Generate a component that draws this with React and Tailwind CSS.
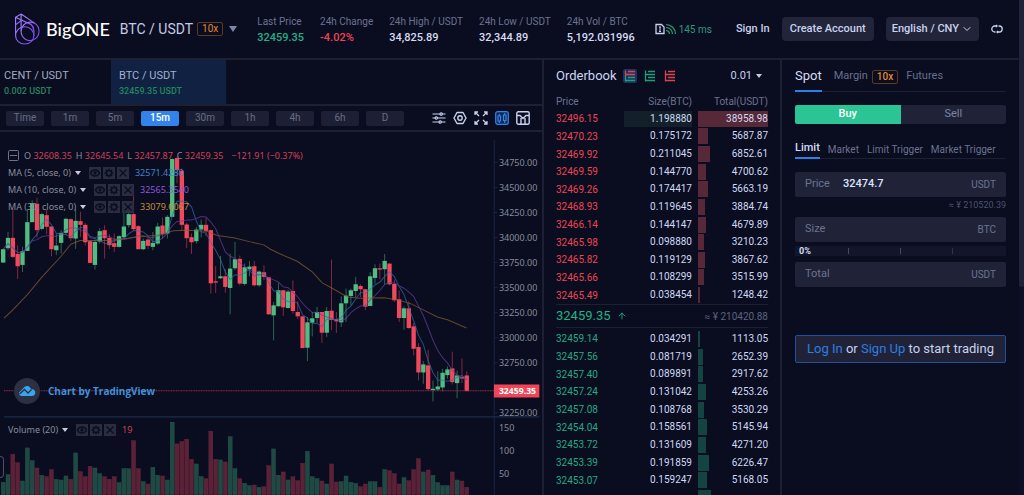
import { useState } from 'react';
import { ChevronDown, ArrowUp } from 'lucide-react';

const stats = [
  { label: 'Last Price', value: '32459.35', color: 'text-[#22b187]' },
  { label: '24h Change', value: '-4.02%', color: 'text-[#ec4652]' },
  { label: '24h High / USDT', value: '34,825.89', color: 'text-[#d5dcf0]' },
  { label: '24h Low / USDT', value: '32,344.89', color: 'text-[#d5dcf0]' },
  { label: '24h Vol / BTC', value: '5,192.031996', color: 'text-[#d5dcf0]' },
];

const intervals = ['Time', '1m', '5m', '15m', '30m', '1h', '4h', '6h', 'D'];

const asks = [
  ['32496.15', '1.198880', '38958.98'],
  ['32470.23', '0.175172', '5687.87'],
  ['32469.92', '0.211045', '6852.61'],
  ['32469.59', '0.144770', '4700.62'],
  ['32469.26', '0.174417', '5663.19'],
  ['32468.93', '0.119645', '3884.74'],
  ['32466.14', '0.144147', '4679.89'],
  ['32465.98', '0.098880', '3210.23'],
  ['32465.82', '0.119129', '3867.62'],
  ['32465.66', '0.108299', '3515.99'],
  ['32465.49', '0.038454', '1248.42'],
];

const bids = [
  ['32459.14', '0.034291', '1113.05'],
  ['32457.56', '0.081719', '2652.39'],
  ['32457.40', '0.089891', '2917.62'],
  ['32457.24', '0.131042', '4253.26'],
  ['32457.08', '0.108768', '3530.29'],
  ['32454.04', '0.158561', '5145.94'],
  ['32453.72', '0.131609', '4271.20'],
  ['32453.39', '0.191859', '6226.47'],
  ['32453.07', '0.159247', '5168.05'],
];

const MAX_TOTAL = 38958.98;

// [up, body top, body bottom, high, low, volume]
const candles = [
  [1, 357, 397, 357, 397, 37], [1, 323, 354, 305, 360, 60], [0, 323, 380, 237, 383, 121], [0, 371, 408, 345, 446, 96],
  [1, 363, 404, 350, 425, 41], [1, 276, 362, 236, 362, 140], [1, 219, 276, 210, 276, 102], [0, 221, 300, 203, 322, 80],
  [1, 252, 296, 248, 300, 58], [0, 255, 290, 238, 312, 54], [0, 289, 357, 289, 378, 75], [1, 346, 360, 310, 374, 46],
  [1, 308, 338, 300, 370, 44], [1, 266, 308, 263, 315, 56], [0, 267, 324, 265, 333, 46], [1, 272, 325, 236, 356, 125],
  [0, 273, 284, 245, 320, 69], [0, 284, 336, 278, 346, 54], [0, 333, 398, 330, 398, 85], [1, 335, 404, 328, 418, 80],
  [1, 303, 334, 294, 340, 63], [0, 300, 324, 285, 385, 54], [0, 323, 345, 312, 356, 46], [0, 339, 350, 310, 365, 54],
  [1, 318, 350, 315, 352, 36], [1, 289, 321, 240, 325, 78], [1, 252, 285, 225, 292, 78], [0, 252, 297, 170, 300, 162],
  [0, 288, 357, 285, 357, 78], [1, 332, 357, 325, 360, 39], [0, 328, 347, 322, 357, 32], [1, 338, 350, 305, 360, 82],
  [1, 289, 340, 278, 345, 58], [0, 286, 312, 262, 325, 56], [1, 260, 310, 255, 325, 44], [1, 87, 260, 85, 262, 217],
  [0, 84, 120, 80, 160, 152], [0, 122, 284, 115, 300, 159], [0, 283, 324, 278, 354, 166], [0, 321, 336, 310, 371, 106],
  [1, 298, 333, 290, 340, 92], [1, 284, 298, 268, 322, 54], [0, 284, 302, 263, 318, 48], [0, 300, 459, 298, 490, 190],
  [0, 453, 457, 407, 488, 106], [1, 438, 444, 377, 446, 104], [0, 438, 470, 416, 487, 98], [1, 415, 473, 370, 552, 174],
  [1, 387, 414, 335, 420, 78], [0, 386, 460, 376, 466, 48], [1, 411, 461, 400, 466, 34], [1, 409, 417, 392, 438, 27],
  [0, 408, 465, 392, 469, 29], [1, 424, 465, 420, 470, 22], [0, 426, 440, 405, 450, 24], [0, 441, 552, 441, 552, 87],
  [1, 525, 555, 515, 630, 137], [1, 480, 528, 458, 528, 58], [0, 480, 531, 478, 557, 68], [1, 484, 533, 478, 535, 44],
  [0, 482, 542, 450, 550, 54], [0, 545, 558, 512, 565, 42], [0, 558, 653, 558, 653, 94], [1, 576, 652, 560, 692, 130],
  [1, 564, 577, 545, 618, 54], [1, 545, 563, 530, 578, 48], [0, 545, 607, 545, 638, 41], [1, 542, 607, 530, 620, 32],
  [0, 541, 569, 388, 600, 92], [0, 567, 573, 545, 608, 38], [1, 519, 576, 498, 590, 39], [1, 496, 519, 475, 575, 56],
  [1, 480, 497, 475, 525, 37], [1, 462, 482, 440, 500, 34], [0, 467, 477, 462, 500, 24], [0, 477, 529, 477, 539, 32],
  [1, 438, 527, 426, 527, 39], [1, 414, 443, 402, 460, 39], [0, 414, 418, 400, 447, 22], [1, 392, 417, 371, 462, 75],
  [0, 400, 462, 400, 465, 72], [0, 461, 510, 448, 515, 63], [0, 507, 563, 480, 575, 32], [1, 534, 563, 528, 598, 51],
  [0, 534, 593, 513, 595, 42], [0, 588, 655, 578, 675, 75], [0, 650, 726, 638, 750, 108], [1, 702, 726, 692, 760, 68],
  [0, 705, 776, 658, 780, 74], [1, 775, 779, 750, 813, 58], [1, 768, 777, 722, 782, 36], [1, 727, 771, 715, 783, 27],
  [1, 717, 734, 708, 745, 27], [0, 714, 755, 664, 762, 68], [1, 735, 758, 720, 803, 44], [0, 740, 744, 684, 758, 41],
  [0, 735, 782, 723, 782, 22],
];

const candleX = (i) => 24 + (i - 1) * 14.46;

// Simple moving average of the closes, as polyline points
const movingAverage = (period) =>
  candles
    .map((_, i) => {
      const slice = candles.slice(Math.max(0, i - period + 1), i + 1);
      const sum = slice.reduce((acc, c) => acc + (c[0] ? c[1] : c[2]), 0);
      return `${candleX(i).toFixed(1)},${(sum / slice.length).toFixed(1)}`;
    })
    .join(' ');

const priceTicks = ['34750.00', '34500.00', '34250.00', '34000.00', '33750.00', '33500.00', '33250.00', '33000.00', '32750.00', null, '32250.00'];

const Logo = () => (
  <svg viewBox="0 0 78 98" className="h-8 w-6.5" fill="none" strokeWidth="3.5">
    <defs>
      <linearGradient id="logo" x1="0" y1="0" x2="1" y2="1">
        <stop offset="0" stopColor="#a583ff" />
        <stop offset="1" stopColor="#7443ea" />
      </linearGradient>
    </defs>
    <g stroke="url(#logo)">
      <path d="M21 3 L4 13 V70 A28 25 0 0 0 32 95 C48 95 60 84 60 70 C60 54 48 42 32 42 C16 42 4 54 4 70" />
      <path d="M21 3 L62 31 A29 29 0 0 1 59 82 C40 90 21 76 21 56 V3" />
      <path d="M4 13 L42 31 C58 34 62 50 60 70" />
      <path d="M21 56 C21 40 34 28 48 28 C54 28 58 29 62 31" />
      <path d="M21 24 L4 36" />
    </g>
  </svg>
);

const BookIcon = ({ top, bottom, active }) => (
  <button type="button" aria-label="Orderbook view" className={`flex size-3.5 items-center justify-center rounded-xs ${active ? 'bg-[#1b3360]' : ''}`}>
    <svg viewBox="0 0 12 12" className="size-3" fill="none" strokeWidth="1.3">
      <path d="M1.5 0.5 V6 M4 1.5 H11 M4 4.5 H11 M1.5 4.5 H4" stroke={top} />
      <path d="M1.5 6 V11.5 M4 7.5 H11 M4 10.5 H11 M1.5 10.5 H4" stroke={bottom} />
    </svg>
  </button>
);

const Caret = () => <span className="inline-block border-x-3 border-t-4 border-x-transparent border-t-[#c5cbdb]" />;

const LegendIcons = () => (
  <span className="ml-1 flex gap-0.5">
    <button type="button" aria-label="Hide" className="flex size-3 items-center justify-center bg-[#2a2d40]">
      <svg viewBox="0 0 12 12" className="size-3" fill="none" stroke="#0b0d22" strokeWidth="1.3">
        <path d="M1.5 6 C3 2 9 2 10.500 6 C9 10 3 10 1.500 6 Z" />
        <circle cx="6" cy="6" r="1" />
      </svg>
    </button>
    <button type="button" aria-label="Settings" className="flex size-3 items-center justify-center bg-[#2a2d40]">
      <svg viewBox="0 0 12 12" className="size-3" fill="none" stroke="#0b0d22">
        <circle cx="6" cy="6" r="2.600" strokeWidth="1.500" />
        <path d="M6 1.500V3M6 9V10.500M1.500 6H3M9 6H10.500M2.800 2.800L3.900 3.900M8.100 8.100L9.200 9.200M9.200 2.800L8.100 3.900M3.900 8.100L2.800 9.200" strokeWidth="1.400" />
      </svg>
    </button>
    <button type="button" aria-label="Remove" className="flex size-3 items-center justify-center bg-[#2a2d40]">
      <svg viewBox="0 0 12 12" className="size-3" stroke="#0b0d22" strokeWidth="1.4">
        <path d="M2.500 2.500L9.500 9.500M9.500 2.500L2.500 9.500" />
      </svg>
    </button>
  </span>
);

const Header = () => (
  <header className="flex h-15 shrink-0 items-center border-b-2 border-[#1d1f33] pr-4 pl-3.5 whitespace-nowrap">
    <a href="#home" className="flex items-center gap-1.5">
      <Logo />
      <span className="font-[Lato] text-lg font-medium text-white">BigONE</span>
    </a>
    <h1 className="ml-2.5 text-sm text-[#c3cbe3]">BTC / USDT</h1>
    <span className="ml-1 rounded-xs border border-[#5a3a22] px-1 text-[10px] leading-3 text-[#e08a35]">10x</span>
    <span className="ml-1.5 border-x-4 border-t-6 border-x-transparent border-t-[#7d87a5]" />

    <dl className="ml-5 flex gap-4 pt-0.5">
      {stats.map((s) => (
        <div key={s.label}>
          <dt className="text-[10px] leading-4 text-[#6a7390]">{s.label}</dt>
          <dd className={`text-[11px] leading-4 font-medium ${s.color}`}>{s.value}</dd>
        </div>
      ))}
    </dl>

    <div className="ml-auto flex items-center text-[11px] text-[#c8d2ee]">
      <svg viewBox="0 0 22 12" className="h-3 w-5.5" fill="none">
        <path d="M1 1.500H6.500L9 4V10.500H1Z" stroke="#c8d2ee" strokeWidth="1.300" />
        <path d="M4 4H6M5 4V8.500M4 8.500H6" stroke="#c8d2ee" />
        <path d="M11 1.500A9.500 9.500 0 0 1 20.500 11M11 4.500A6.500 6.500 0 0 1 17.500 11M11 7.500A3.500 3.500 0 0 1 14.500 11" stroke="#2f9a6f" strokeWidth="1.200" />
      </svg>
      <span className="ml-0.5 text-[10px] text-[#2f9a78]">145 ms</span>
      <a href="#signin" className="ml-6 font-medium">Sign In</a>
      <button type="button" className="ml-3 h-6 rounded-sm bg-[#222439] px-2 font-medium">Create Account</button>
      <button type="button" className="ml-3 flex h-6 items-center gap-0.5 rounded-sm bg-[#222439] px-1.5 font-medium">
        English / CNY
        <ChevronDown className="size-3" />
      </button>
      <svg viewBox="0 0 12 10" className="ml-3 h-2.5 w-3" fill="none" stroke="#c8d2ee" strokeWidth="1.300">
        <path d="M4.500 8H3.800A3 3 0 0 1 3.800 2H6.500M7.500 2H8.200A3 3 0 0 1 8.200 8H5.500M5.500 0.800V3.200M6.500 6.800V9.200" />
      </svg>
    </div>
  </header>
);

const Tickers = () => (
  <div className="flex h-11.5 shrink-0 border-b-2 border-[#1d1f33]">
    <a href="#cent" className="flex w-27.75 flex-col justify-center pt-0.5 pl-1">
      <span className="text-[11px] leading-4 text-[#a3aac0]">CENT / USDT</span>
      <span className="text-[9px] leading-3.5 font-medium text-[#22875f]">0.002 USDT</span>
    </a>
    <a href="#btc" className="flex w-28.75 flex-col justify-center bg-[#102142] pt-0.5 pl-2">
      <span className="text-[11px] leading-4 text-[#a3b0d0]">BTC / USDT</span>
      <span className="text-[9px] leading-3.5 font-medium text-[#22875f]">32459.35 USDT</span>
    </a>
  </div>
);

const Toolbar = () => {
  const [active, setActive] = useState('15m');
  return (
    <div className="flex h-6.5 shrink-0 items-center justify-between border-b-2 border-[#1d1f33] pr-3 pl-1.5">
      <div className="flex gap-1.75">
        {intervals.map((label) => (
          <button
            key={label}
            type="button"
            onClick={() => setActive(label)}
            className={`h-3.75 w-9.5 rounded-xs text-[10px] leading-3.5 ${active === label ? 'bg-[#3284ea] font-medium text-white' : 'bg-[#1d2034] text-[#666d85]'}`}
          >
            {label}
          </button>
        ))}
      </div>
      <div className="flex gap-1.75 text-[#c8d2ee]">
        <svg viewBox="0 0 14 14" className="size-3.5" fill="none" stroke="currentColor" strokeWidth="1.200">
          <path d="M0.500 3H8M10.500 3H13.500M0.500 7H3M5.500 7H13.500M0.500 11H7M9.500 11H13.500" />
          <circle cx="9.200" cy="3" r="1.200" />
          <circle cx="4.300" cy="7" r="1.200" />
          <circle cx="8.200" cy="11" r="1.200" />
        </svg>
        <svg viewBox="0 0 14 14" className="size-3.5" fill="none" stroke="currentColor" strokeWidth="1.400">
          <path d="M4 1.500H10L13 7L10 12.500H4L1 7Z" strokeLinejoin="round" />
          <circle cx="7" cy="7" r="2.200" />
        </svg>
        <svg viewBox="0 0 14 14" className="size-3.5" fill="none" stroke="currentColor" strokeWidth="1.300">
          <path d="M1 4V1H4M10 1H13V4M13 10V13H10M4 13H1V10M1.500 1.500L5 5M12.500 1.500L9 5M12.500 12.500L9 9M1.500 12.500L5 9" />
        </svg>
        <svg viewBox="0 0 14 14" className="size-3.5" fill="#122a55" stroke="#3284ea" strokeWidth="1.200">
          <rect x="0.700" y="0.700" width="12.600" height="12.600" rx="2" />
          <path d="M3 5H5.500V10H3ZM8.500 4H11V9.500H8.500ZM4.300 3V5M4.300 10V12M9.700 2V4M9.700 9.500V12" />
        </svg>
        <svg viewBox="0 0 14 14" className="size-3.5" fill="none" stroke="currentColor" strokeWidth="1.400">
          <rect x="0.800" y="0.800" width="12.400" height="12.400" rx="1.500" />
          <path d="M1 4.500H4L7 7.500L10 4.500H13M5 7V13M9 13V7" />
        </svg>
      </div>
    </div>
  );
};

const Chart = () => (
  <div className="relative min-h-0 flex-1 overflow-hidden font-['Noto_Sans',sans-serif] text-[9px] text-[#868c9c]">
    <svg viewBox="0 6 1623 1092" className="block w-full" role="img" aria-label="BTC / USDT 15m candles">
      <g stroke="#172743" strokeWidth="3">
        <path d="M1480 30V1098" />
        <path d="M12 859H1615" stroke="#1d2d49" strokeWidth="4" />
        {priceTicks.map((_, i) => (
          <path key={i} d={`M1480 ${97 + i * 75}h10`} />
        ))}
      </g>

      {candles.map(([up, , , , , volume], i) => (
        <rect key={i} x={candleX(i) - 6} y={1092 - volume} width="12" height={volume} fill={up ? '#1f4a44' : '#5b2237'} stroke={up ? '#2b5f52' : '#742a3e'} strokeWidth="1" />
      ))}

      {candles.map(([up, top, bottom, high, low], i) => (
        <g key={i} fill={up ? '#50bd83' : '#f2485e'}>
          <rect x={candleX(i) - 1.5} y={high} width="3" height={low - high} opacity="0.5" />
          <rect x={candleX(i) - 6.5} y={top} width="13" height={bottom - top} />
        </g>
      ))}

      <g fill="none" strokeWidth="3" opacity="0.7">
        <polyline points={movingAverage(5)} stroke="#2f6fa8" />
        <polyline points={movingAverage(10)} stroke="#65419f" />
        <path
          d="M12 563L40 537L82 493L126 440L183 378L212 342L240 331H330L400 322L470 315L520 302L560 300L620 303L650 316L700 323L750 335L790 344L810 357L836 370L890 393L935 425L965 458L1000 477L1040 500L1080 504L1150 502L1190 508L1230 520L1260 535L1310 560L1340 568L1397 593"
          stroke="#8a6136"
        />
      </g>

      <path d="M12 781H1480" stroke="#a5304a" strokeWidth="3" strokeDasharray="3 2" />

      <g fontSize="27" fill="#868c9c">
        {priceTicks.map((t, i) => t && <text key={t} x="1494" y={107 + i * 75}>{t}</text>)}
        <text x="1494" y="902">150</text>
        <text x="1494" y="971">100</text>
        <text x="1494" y="1039">50</text>
      </g>
      <rect x="1479" y="762" width="136" height="39" fill="#ee4656" />
      <text x="1494" y="791" fontSize="26" fontWeight="700" fill="#fff">32459.35</text>
    </svg>

    <div className="absolute top-4 left-2 flex flex-col gap-px whitespace-nowrap">
      <p className="flex h-4 items-center gap-1">
        <svg viewBox="0 0 12 12" className="size-3" fill="none" stroke="#6d7488">
          <rect x="0.500" y="0.500" width="10" height="10" rx="1" />
          <path d="M2 5.500H9" />
        </svg>
        <span>O <span className="text-[#d04058]">32608.35</span></span>
        <span>H <span className="text-[#d04058]">32645.54</span></span>
        <span>L <span className="text-[#d04058]">32457.87</span></span>
        <span>C <span className="text-[#d04058]">32459.35</span></span>
        <span className="ml-1 text-[#d04058]">−121.91 (−0.37%)</span>
      </p>
      <div className="flex h-4 items-center gap-1">MA (5, close, 0) <Caret /> <LegendIcons /> <span className="ml-0.5 text-[#3f83cc]">32571.4280</span></div>
      <div className="flex h-4 items-center gap-1">MA (10, close, 0) <Caret /> <LegendIcons /> <span className="ml-0.5 text-[#8f58d2]">32565.3540</span></div>
      <div className="flex h-4 items-center gap-1">MA (30, close, 0) <Caret /> <LegendIcons /> <span className="ml-0.5 text-[#c48c38]">33079.6067</span></div>
    </div>

    <a href="#tradingview" className="absolute top-61.5 left-3.5 flex items-center gap-2">
      <span className="flex size-6.5 items-center justify-center rounded-full bg-[#2d3042]">
        <svg viewBox="0 0 18 12" className="h-3 w-4.5" fill="#37a6ef">
          <path d="M1 7.500L5.500 3C7 0.500 10.500 0.300 12 2.500L13 4C16 4 17.500 6 17.300 8C17.200 10 15.500 11 14 11H4C1.500 11 0.500 9 1 7.500Z" />
          <path d="M1.500 9L6.500 4.500L10 8L13.500 4.500" fill="none" stroke="#2d3042" strokeWidth="1.300" />
        </svg>
      </span>
      <span className="font-['Open_Sans'] text-[10px] font-bold text-[#3b93dc]">Chart by TradingView</span>
    </a>

    <div className="absolute top-72.5 left-2 flex h-4 items-center gap-1">
      Volume (20) <Caret /> <LegendIcons /> <span className="ml-0.5 text-[#d04058]">19</span>
    </div>
    <button type="button" aria-label="Open drawing tools" className="absolute top-81 left-0 h-5.5 w-1 rounded-r-sm border border-l-0 border-[#4a4f63]" />
  </div>
);

const BookRow = ({ row, side, highlight }) => (
  <tr>
    <td className={`p-0 ${side === 'ask' ? 'text-[#ec4652]' : 'text-[#22ab80]'}`}>{row[0]}</td>
    <td className="p-0 text-right">
      <div className={`h-4 leading-4 ${highlight ? 'bg-[#142029]' : ''}`}>{row[1]}</div>
    </td>
    <td className="p-0 pl-1.5 text-right">
      <div className="relative h-4 leading-4">
        <span
          className={`absolute inset-y-0 left-0 ${side === 'ask' ? 'bg-[#572938]' : 'bg-[#134442]'}`}
          style={{ width: `${(Number(row[2]) / MAX_TOTAL) * 100}%` }}
        />
        <span className="relative">{row[2]}</span>
      </div>
    </td>
  </tr>
);

const OrderBook = () => (
  <section className="flex w-60 shrink-0 flex-col overflow-hidden border-x-2 border-[#1d1f33] px-3">
    <div className="flex h-8 shrink-0 items-center gap-1.5">
      <h2 className="text-[13px] text-[#ccd6f2]">Orderbook</h2>
      <BookIcon top="#e0434f" bottom="#1fa078" active />
      <BookIcon top="#1fa078" bottom="#1fa078" />
      <BookIcon top="#e0434f" bottom="#e0434f" />
      <button type="button" className="mr-1.5 ml-auto flex items-center gap-1 text-[11px] text-[#c8d2ee]">
        0.01 <Caret />
      </button>
    </div>
    <table className="h-[212px] w-full shrink-0 table-fixed text-[10px] text-[#cfd9f4]">
      <thead>
        <tr className="h-4.5 text-[#6a7390]">
          <th className="w-17 p-0 text-left font-normal">Price</th>
          <th className="w-17 p-0 text-right font-normal">Size(BTC)</th>
          <th className="p-0 text-right font-normal">Total(USDT)</th>
        </tr>
      </thead>
      <tbody>
        {asks.map((row, i) => <BookRow key={row[0]} row={row} side="ask" highlight={i === 0} />)}
      </tbody>
    </table>
    <div className="flex h-6 shrink-0 items-center border-y border-[#1d1f33]">
      <span className="text-[13px] text-[#22b384]">32459.35</span>
      <ArrowUp className="ml-1.5 size-2.5 text-[#22b384]" />
      <span className="ml-auto text-[10px] text-[#5c647e]">≈ ¥ 210420.88</span>
    </div>
    <table className="mt-0.5 h-[177px] w-full shrink-0 table-fixed text-[10px] text-[#cfd9f4]">
      <colgroup>
        <col className="w-17" />
        <col className="w-17" />
        <col />
      </colgroup>
      <tbody>
        {bids.map((row) => <BookRow key={row[0]} row={row} side="bid" />)}
        <tr>
          <td className="p-0" />
          <td className="p-0" />
          <td className="p-0 pl-1.5"><div className="h-4 w-3.25 bg-[#134442]" /></td>
        </tr>
      </tbody>
    </table>
  </section>
);

const Field = ({ id, label, unit, defaultValue }) => (
  <div className="flex h-6.25 items-center rounded-xs bg-[#202338] px-2.5 text-[#6a7390]">
    <label htmlFor={id} className="w-9.5 text-[11px]">{label}</label>
    <input id={id} defaultValue={defaultValue} className="min-w-0 flex-1 bg-transparent text-[11px] font-medium text-[#dbe4fb] outline-none" />
    <span className="text-[10px]">{unit}</span>
  </div>
);

const TradePanel = () => (
  <section className="w-59.25 shrink-0 px-3.25">
    <nav className="flex h-8 items-stretch border-b border-[#1d1f33] text-[11px] text-[#67708d]">
      <a href="#spot" className="-mb-px flex items-center border-b-2 border-[#2c7fe6] pt-0.5 text-[13px] text-[#d5def5]">Spot</a>
      <a href="#margin" className="ml-3 flex items-center pt-0.5">
        Margin
        <span className="ml-1 rounded-xs border border-[#5a3a22] px-1 text-[10px] leading-3 font-medium text-[#e08a35]">10x</span>
      </a>
      <a href="#futures" className="ml-2 flex items-center pt-0.5">Futures</a>
    </nav>

    <div className="mt-3.25 flex h-4.75 overflow-hidden rounded-xs text-[11px]">
      <button type="button" className="flex-1 bg-[#2bc494] font-medium text-white">Buy</button>
      <button type="button" className="flex-1 bg-[#202338] text-[#7b86a6]">Sell</button>
    </div>

    <nav className="mt-3 flex h-5.75 items-stretch gap-2 border-b border-[#1d1f33] text-[10px] text-[#6a7390] whitespace-nowrap">
      <a href="#limit" className="-mb-px flex items-center border-b-2 border-[#2c7fe6] pt-1 text-[11px] font-medium text-[#d5def5]">Limit</a>
      <a href="#market" className="flex items-center pt-1">Market</a>
      <a href="#limit-trigger" className="flex items-center pt-1">Limit Trigger</a>
      <a href="#market-trigger" className="flex items-center pt-1">Market Trigger</a>
    </nav>

    <form className="mt-3.25">
      <Field id="price" label="Price" unit="USDT" defaultValue="32474.7" />
      <p className="h-5 text-right text-[9px] leading-4 text-[#4d546d]">≈ ¥ 210520.39</p>
      <Field id="size" label="Size" unit="BTC" />
      <div className="mt-1 mb-1.5 grid h-2.5 grid-cols-4 items-center bg-[#13162a] text-[9px] leading-none font-bold text-[#d5def5]">
        <span className="pl-1">0%</span>
        <span className="h-1.5 border-x border-[#454a60]" />
        <span className="h-1.5 border-r border-[#30344a]" />
      </div>
      <Field id="total" label="Total" unit="USDT" />
    </form>

    <p className="mt-12 flex h-7 items-center justify-center rounded-xs border border-[#21509a] bg-[#202338] text-[13px] whitespace-pre text-[#c8d2ee]">
      <a href="#login" className="text-[#2f7de0]">Log In</a> or <a href="#signup" className="text-[#2f7de0]">Sign Up</a> to start trading
    </p>
  </section>
);

const App = () => (
  <div className="flex h-screen overflow-hidden bg-[#0a0c20] font-[Roboto,sans-serif]">
    <div className="flex min-w-0 flex-1 flex-col">
      <Header />
      <main className="flex min-h-0 flex-1">
        <section className="flex min-w-0 flex-1 flex-col">
          <Tickers />
          <Toolbar />
          <Chart />
        </section>
        <OrderBook />
        <TradePanel />
      </main>
    </div>
    <div className="w-1.25 shrink-0 bg-[#0d0f24]">
      <div className="h-[58%] rounded-b-sm bg-[#202338]" />
    </div>
  </div>
);

export default App;
